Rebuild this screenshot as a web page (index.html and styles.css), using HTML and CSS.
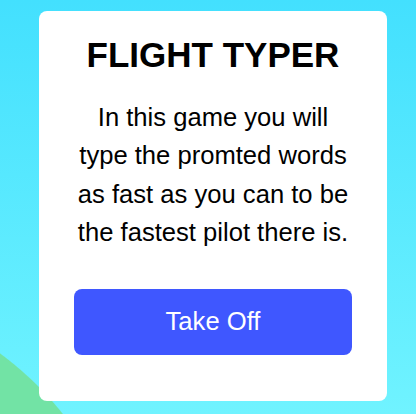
FILE: index.html
```html
<!DOCTYPE html>
<html lang="en">
<head>
<meta charset="utf-8">
<title>Flight Typer</title>
<link rel="stylesheet" href="styles.css">
</head>
<body>
<main class="card">
  <h1 class="title">FLIGHT TYPER</h1>
  <p class="intro">In this game you will type the promted words as fast as you can to be the fastest pilot there is.</p>
  <button class="start">Take Off</button>
</main>
</body>
</html>
```
FILE: styles.css
```css
html {
  height: 100%;
}
body {
  margin: 0;
  height: 100%;
  background:
    radial-gradient(circle 337px at -200px 624px, #72e3a5 336px, rgba(114, 227, 165, 0) 337px),
    linear-gradient(180deg, #43e0fe 0%, #70f3ff 100%);
  font-family: "Liberation Sans", Arial, sans-serif;
  padding: 11px 0 0 39px;
  box-sizing: border-box;
}
.card {
  width: 348px;
  height: 390px;
  box-sizing: border-box;
  padding: 24px 35px 0;
  background: #fff;
  border-radius: 8px;
  display: flex;
  flex-direction: column;
  align-items: stretch;
  text-align: center;
}
.title {
  margin: 0;
  font-size: 35px;
  font-weight: 700;
  color: #000;
  line-height: 39px;
}
.intro {
  margin: 24px 0 0;
  font-size: 25.6px;
  line-height: 38.4px;
  color: #000;
}
.start {
  margin-top: 37px;
  height: 66px;
  border: none;
  border-radius: 8px;
  background: #3f57ff;
  color: #fff;
  font-family: "Liberation Sans", Arial, sans-serif;
  font-size: 25.6px;
  cursor: pointer;
}
```
